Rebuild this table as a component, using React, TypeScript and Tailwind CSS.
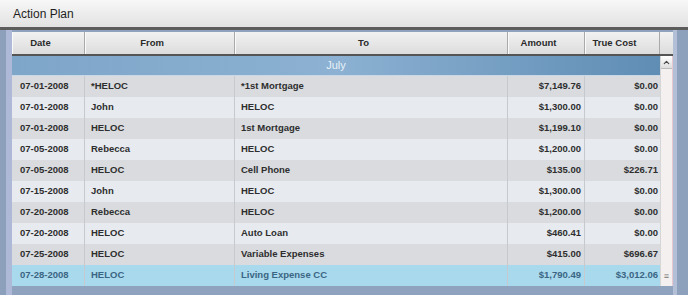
import { ChevronUp } from "lucide-react";

type Row = { date: string; from: string; to: string; amount: string; cost: string };

const rows: Row[] = [
  { date: "07-01-2008", from: "*HELOC", to: "*1st Mortgage", amount: "$7,149.76", cost: "$0.00" },
  { date: "07-01-2008", from: "John", to: "HELOC", amount: "$1,300.00", cost: "$0.00" },
  { date: "07-01-2008", from: "HELOC", to: "1st Mortgage", amount: "$1,199.10", cost: "$0.00" },
  { date: "07-05-2008", from: "Rebecca", to: "HELOC", amount: "$1,200.00", cost: "$0.00" },
  { date: "07-05-2008", from: "HELOC", to: "Cell Phone", amount: "$135.00", cost: "$226.71" },
  { date: "07-15-2008", from: "John", to: "HELOC", amount: "$1,300.00", cost: "$0.00" },
  { date: "07-20-2008", from: "Rebecca", to: "HELOC", amount: "$1,200.00", cost: "$0.00" },
  { date: "07-20-2008", from: "HELOC", to: "Auto Loan", amount: "$460.41", cost: "$0.00" },
  { date: "07-25-2008", from: "HELOC", to: "Variable Expenses", amount: "$415.00", cost: "$696.67" },
  { date: "07-28-2008", from: "HELOC", to: "Living Expense CC", amount: "$1,790.49", cost: "$3,012.06" },
];

function HeaderCell({ label, w }: { label: string; w: string }) {
  return (
    <div className={`${w} h-full flex items-center justify-center pr-[15px] border-r border-[#a9a9a9] shadow-[inset_1px_0_0_#fafafa]`}>
      {label}
    </div>
  );
}

function DataRow({ row, idx }: { row: Row; idx: number }) {
  const selected = idx === rows.length - 1;
  const bg = selected ? "bg-[#a9d9ec] text-[#3a6684]" : idx % 2 === 0 ? "bg-[#d9dbde] text-[#2e2e2e]" : "bg-[#e7ebf0] text-[#2e2e2e]";
  return (
    <div className={`flex h-[21px] items-center font-bold ${bg}`}>
      <div className="w-[73px] h-full flex items-center pl-[8px] border-r border-[#c6c9cd]">{row.date}</div>
      <div className="w-[150px] h-full flex items-center pl-[6px] border-r border-[#c6c9cd]">{row.from}</div>
      <div className="w-[273px] h-full flex items-center pl-[6px] border-r border-[#c6c9cd]">{row.to}</div>
      <div className="w-[77px] h-full flex items-center justify-end pr-[3px] border-r border-[#c6c9cd]">{row.amount}</div>
      <div className="w-[75px] h-full flex items-center justify-end pr-[2px]">{row.cost}</div>
    </div>
  );
}

export default function App() {
  return (
    <div
      className="w-[688px] h-[295px] overflow-hidden flex flex-col bg-[#8fa3bf] text-[9.5px]"
      style={{ fontFamily: '"Liberation Sans", Arial, sans-serif' }}
    >
      <div className="h-[30px] shrink-0 flex items-center pl-[13px] bg-gradient-to-b from-[#f7f7f7] to-[#e2e2e2] text-[12px] text-[#1e1e1e] border-b-[3px] border-[#5c5c5c]">
        Action Plan
      </div>

      <div className="flex flex-1">
        <div className="w-[12px] flex">
          <div className="w-[6px] bg-[#8c9fbb]" />
          <div className="w-[6px] bg-[#aeb9d8]" />
        </div>

        <div className="w-[661px] flex flex-col pt-[2px]">
          <div className="h-[24px] shrink-0 flex bg-gradient-to-b from-[#f2f2f2] to-[#dcdcdc] font-bold text-[#2a2a2a] border-b-2 border-[#555]">
            <HeaderCell label="Date" w="w-[73px]" />
            <HeaderCell label="From" w="w-[150px]" />
            <HeaderCell label="To" w="w-[273px]" />
            <HeaderCell label="Amount" w="w-[77px]" />
            <HeaderCell label="True Cost" w="w-[75px]" />
            <div className="flex-1" />
          </div>

          <div className="flex">
            <div className="w-[648px] flex flex-col">
              <div className="h-[20px] flex items-center justify-center bg-gradient-to-r from-[#7ea6c8] via-[#8cb1d2] to-[#5f8db4] text-[#e8f0f8] text-[11px] border-b border-[#c8d8e6]">
                July
              </div>
              {rows.map((r, i) => (
                <DataRow key={i} row={r} idx={i} />
              ))}
            </div>
            <div className="w-[13px] flex flex-col bg-[#f4f0f0] border-l border-[#d6d6d6] border-r border-r-[#e8c8d0]">
              <div className="h-[13px] flex items-center justify-center bg-gradient-to-b from-[#ffffff] to-[#dedede] border-b border-[#bbb]">
                <ChevronUp size={9} strokeWidth={3} className="text-[#444]" />
              </div>
              <div className="flex-1" />
              <div className="h-[20px] flex items-center justify-center text-[#777] text-[9px] leading-none">≡</div>
            </div>
          </div>
        </div>

        <div className="flex-1 flex">
          <div className="w-[4px] bg-[#b2bfd6]" />
          <div className="flex-1 bg-[#8da1bd]" />
        </div>
      </div>
    </div>
  );
}
